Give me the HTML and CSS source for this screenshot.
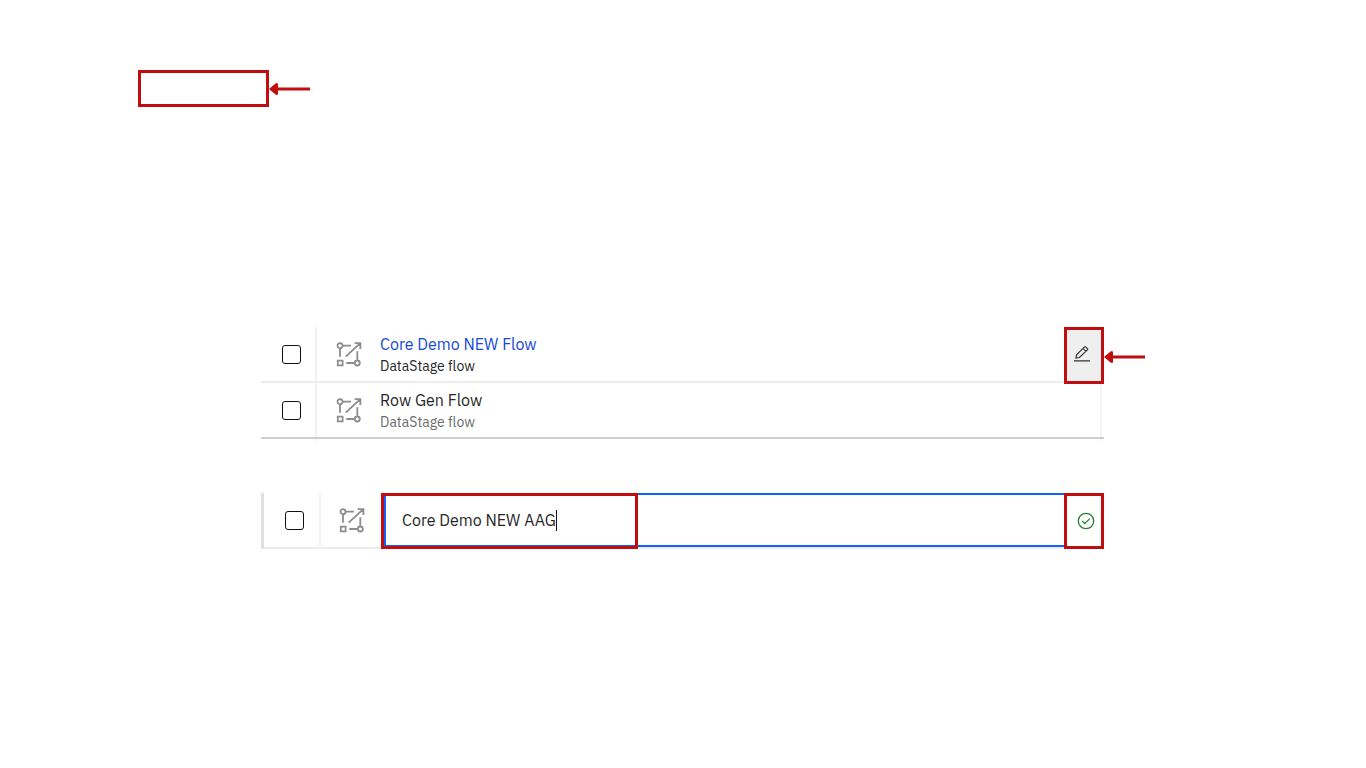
FILE: index.html
```html
<!DOCTYPE html>
<html lang="en">
<head>
<meta charset="utf-8">
<title>Rename flow</title>
<link rel="stylesheet" href="styles.css">
</head>
<body>
<svg class="defs" aria-hidden="true">
  <symbol id="flow" viewBox="0 0 26 26">
    <g fill="none" stroke="#8d8d8d" stroke-width="1.8">
      <circle cx="4" cy="4.7" r="2.5"/>
      <circle cx="21.3" cy="22" r="2.5"/>
      <path d="M1.8 19.6h4.8v4.8H1.8zM7 4.7h8M4 7.7v8M21.3 10.2v8.5M10.3 22h8M9.7 15.7 24 2.4M18.6 2.2h5.8v5.9"/>
    </g>
  </symbol>
  <symbol id="arrow" viewBox="0 0 42 14">
    <path fill="#c00d0d" d="M0 7 6.5 1.4Q9 .2 9 2.5v3h32v3H9v3q0 2.3-2.5 1.1z"/>
  </symbol>
</svg>
<main class="page">
  <div class="step">
    <div class="callout callout-empty"></div>
    <svg class="arrow" aria-hidden="true"><use href="#arrow"/></svg>
  </div>

  <div class="assets">
    <table class="asset-table">
      <tr>
        <td class="select"><input class="check" type="checkbox" aria-label="Select Core Demo NEW Flow"></td>
        <td class="type"><svg class="flow" aria-hidden="true"><use href="#flow"/></svg></td>
        <td class="text"><a class="name" href="#">Core Demo NEW Flow</a><div class="kind">DataStage flow</div></td>
        <td class="action">
          <button class="edit callout" type="button" aria-label="Rename">
            <svg class="pencil" viewBox="0 0 18 18" fill="none" stroke="#333" stroke-width="1.2" aria-hidden="true">
              <path d="M1 15.9h16M2.9 13.1l.7-3.2 7.9-8q.6-.6 1.2 0l1.7 1.7q.6.6 0 1.2l-8 7.7zM10 3.4l2.9 2.9"/>
            </svg>
          </button>
          <svg class="arrow arrow-side" aria-hidden="true"><use href="#arrow"/></svg>
        </td>
      </tr>
      <tr>
        <td class="select"><input class="check" type="checkbox" aria-label="Select Row Gen Flow"></td>
        <td class="type"><svg class="flow" aria-hidden="true"><use href="#flow"/></svg></td>
        <td class="text"><div class="name">Row Gen Flow</div><div class="kind muted">DataStage flow</div></td>
        <td class="action"></td>
      </tr>
    </table>
  </div>

  <div class="rename">
    <div class="rename-select"><input class="check" type="checkbox" aria-label="Select flow"></div>
    <div class="rename-type"><svg class="flow" aria-hidden="true"><use href="#flow"/></svg></div>
    <div class="field">
      <input class="field-input" type="text" value="Core Demo NEW AAG" aria-label="Flow name"><span class="caret"></span>
      <div class="callout field-callout"></div>
    </div>
    <button class="confirm callout" type="button" aria-label="Save name">
      <svg class="tick" viewBox="0 0 18 18" fill="none" stroke="#24813b" stroke-width="1.3" aria-hidden="true">
        <circle cx="9" cy="9" r="7.7"/><path d="m5.2 9 2.6 2.6 5-5"/>
      </svg>
    </button>
  </div>
</main>
</body>
</html>
```
FILE: styles.css
```css
* { box-sizing: border-box; }
body {
  margin: 0;
  background: #fff;
  color: #262626;
  font: 16px/22px "IBM Plex Sans", "Noto Sans", sans-serif;
}
.defs { display: none; }
.page { padding: 70px 262px 0 261px; }
.callout { border: 3px solid #c00d0d; }
.arrow { width: 42px; height: 14px; display: block; }

.step {
  display: flex;
  align-items: center;
  margin: 0 0 220px -123px;
}
.callout-empty { width: 131px; height: 37px; }

.assets {
  padding-bottom: 2px;
  background:
    linear-gradient(#f0f0f0, #f0f0f0) 54px 0 / 2px 100% no-repeat,
    linear-gradient(#f4f4f4, #f4f4f4) right 2px top 0 / 2px 100% no-repeat;
}
.asset-table {
  width: 100%;
  table-layout: fixed;
  border-collapse: separate;
  border-spacing: 0;
}
.asset-table td {
  height: 56px;
  padding: 0;
  border-bottom: 2px solid #eee;
}
.asset-table tr:last-child td { border-color: #cecece; }
.asset-table .select { width: 56px; padding-left: 21px; }
.asset-table .type { width: 63px; padding-left: 19px; }
.asset-table .text { padding-top: 2px; }
.asset-table .action { width: 40px; position: relative; }
.check {
  appearance: none;
  display: block;
  width: 19px;
  height: 19px;
  margin: 0;
  border: 1px solid #111;
  border-radius: 3px;
}
.flow { display: block; width: 26px; height: 26px; }
.name { display: block; font-size: 16px; text-decoration: none; }
a.name { color: #1549d6; }
.kind { font-size: 14px; }
.muted { color: #6b6b6b; }
.edit, .confirm {
  display: flex;
  align-items: center;
  justify-content: center;
}
.edit {
  position: absolute;
  inset: 0 0 -3px;
  padding: 0 4px 4px 0;
  background: #efefef;
}
.pencil, .tick { width: 18px; height: 18px; }
.arrow-side {
  position: absolute;
  left: 100%;
  top: 23px;
}

.rename {
  display: grid;
  grid-template-columns: 58px 60px 1fr 40px;
  height: 56px;
  margin-top: 52px;
  border-left: 3px solid #e0e0e0;
  background: linear-gradient(#ececec, #ececec) left bottom / 100% 2px no-repeat;
}
.rename-select, .rename-type { display: flex; align-items: center; padding-bottom: 2px; }
.rename-select { padding-left: 21px; border-right: 2px solid #f4f4f4; width: 57px; }
.rename-type { padding-left: 17px; }
.field {
  position: relative;
  display: flex;
  align-items: center;
  height: 54px;
  padding-left: 16px;
  margin: 0 -3px 0 2px;
  border: 2px solid #0f62fe;
}
.field-input {
  field-sizing: content;
  padding: 0;
  border: 0;
  outline: 0;
  background: none;
  color: inherit;
  font: inherit;
}
.caret { width: 1px; height: 21px; background: #111; }
.field-callout {
  position: absolute;
  inset: -2px auto -4px -5px;
  width: 257px;
}
.confirm { position: relative; background: none; padding: 0 0 1px 3px; }
```
